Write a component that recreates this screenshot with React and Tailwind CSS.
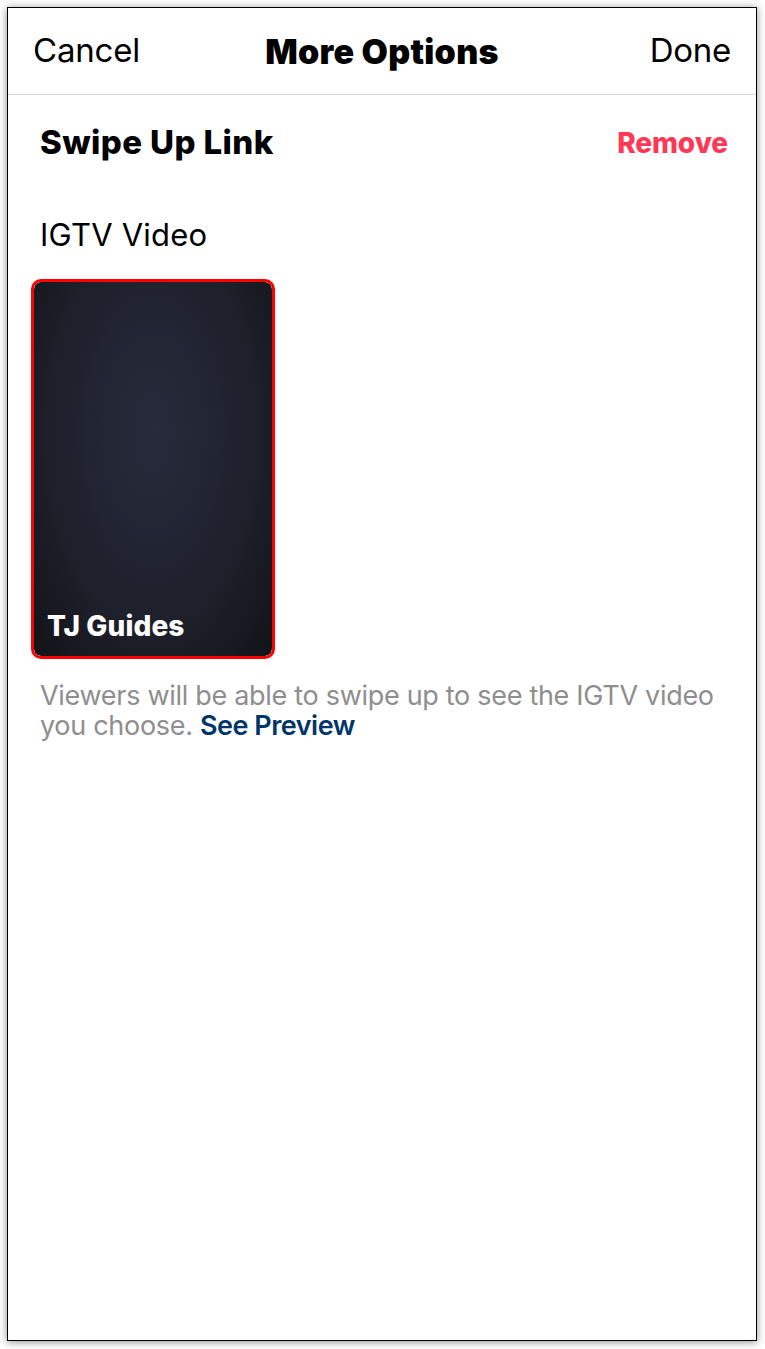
export default function App() {
  const font = { fontFamily: 'Inter, "Noto Sans", sans-serif' };
  return (
    <div className="w-[765px] h-[1349px] bg-white pt-[7px] pl-[7px]" style={font}>
      <div className="w-[750px] h-[1334px] border border-black bg-white shadow-[0_1px_8px_rgba(0,0,0,0.45)] flex flex-col">
        <div className="h-[87px] flex items-center justify-between px-[25px] border-b border-[#dbdbdb] relative">
          <span className="text-[33px] text-black tracking-[-0.2px]">Cancel</span>
          <span className="absolute left-0 right-0 text-center text-[34px] font-black text-black tracking-[0.3px] pointer-events-none">More Options</span>
          <span className="text-[33px] text-black tracking-[-0.3px]">Done</span>
        </div>
        <div className="h-[96px] flex items-center justify-between pl-[32px] pr-[28px]">
          <span className="text-[33px] font-extrabold text-black tracking-[0.4px]">Swipe Up Link</span>
          <span className="text-[28px] font-extrabold text-[#ff3856] tracking-[-0.1px]">Remove</span>
        </div>
        <div className="h-[88px] flex items-center pl-[32px]">
          <span className="text-[31px] text-black tracking-[0.2px]">IGTV Video</span>
        </div>
        <div className="pl-[23px]">
          <div className="w-[244px] h-[380px] border-[3px] border-[#ff0000] rounded-[10px] overflow-hidden">
            <div className="w-full h-full rounded-[7px] bg-[radial-gradient(ellipse_at_50%_40%,#272b3c_0%,#1e202b_60%,#121318_100%)] flex flex-col justify-end pl-[13px] pb-[13px]">
              <span className="text-[28px] font-extrabold text-white leading-[34px] tracking-[0.1px]">TJ Guides</span>
            </div>
          </div>
        </div>
        <p className="mt-[22px] pl-[32px] pr-[30px] text-[27px] leading-[30px] text-[#8e8e8e] tracking-[-0.3px]">
          Viewers will be able to swipe up to see the IGTV video you choose.{' '}
          <span className="text-[#003569] font-semibold tracking-[-0.5px]">See Preview</span>
        </p>
      </div>
    </div>
  );
}
